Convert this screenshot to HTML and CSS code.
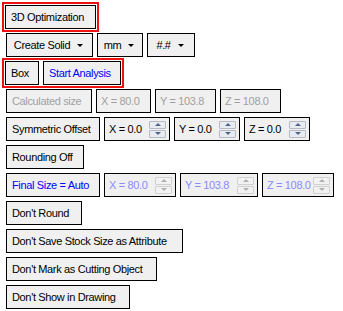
FILE: index.html
```html
<!DOCTYPE html>
<html lang="en">
<head>
    <meta charset="UTF-8">
    <meta name="viewport" content="width=device-width, initial-scale=1.0">
    <title>Stock Size</title>
    <link rel="stylesheet" href="styles.css">
</head>
<body>
    <div class="panel">
        <!-- Mode -->
        <div class="row">
            <div class="btn marked btn-optimize">3D Optimization</div>
        </div>

        <!-- Options -->
        <div class="row">
            <div class="btn drop btn-create">Create Solid<span class="caret"></span></div>
            <div class="btn drop btn-unit">mm<span class="caret"></span></div>
            <div class="btn drop btn-format">#.#<span class="caret"></span></div>
        </div>

        <div class="row marked">
            <div class="btn btn-box">Box</div>
            <div class="btn blue btn-start">Start Analysis</div>
        </div>

        <!-- Calculated size -->
        <div class="row">
            <div class="btn disabled btn-calc">Calculated size</div>
            <div class="field disabled field-x">X = 80.0</div>
            <div class="field disabled field-y">Y = 103.8</div>
            <div class="field disabled field-z">Z = 108.0</div>
        </div>

        <!-- Offset -->
        <div class="row">
            <div class="btn btn-wide">Symmetric Offset</div>
            <div class="field spin spin-offset">
                <span class="val">X = 0.0</span>
                <span class="spinner"><span class="up"></span><span class="down"></span></span>
            </div>
            <div class="field spin spin-offset">
                <span class="val">Y = 0.0</span>
                <span class="spinner"><span class="up"></span><span class="down"></span></span>
            </div>
            <div class="field spin spin-offset">
                <span class="val">Z = 0.0</span>
                <span class="spinner"><span class="up"></span><span class="down"></span></span>
            </div>
        </div>

        <div class="row">
            <div class="btn btn-rounding">Rounding Off</div>
        </div>

        <!-- Final size -->
        <div class="row">
            <div class="btn blue btn-wide">Final Size = Auto</div>
            <div class="field spin off spin-x">
                <span class="val">X = 80.0</span>
                <span class="spinner"><span class="up"></span><span class="down"></span></span>
            </div>
            <div class="field spin off spin-y">
                <span class="val">Y = 103.8</span>
                <span class="spinner"><span class="up"></span><span class="down"></span></span>
            </div>
            <div class="field spin off spin-x">
                <span class="val">Z = 108.0</span>
                <span class="spinner"><span class="up"></span><span class="down"></span></span>
            </div>
        </div>

        <div class="row">
            <div class="btn btn-round">Don't Round</div>
        </div>
        <div class="row">
            <div class="btn btn-save">Don't Save Stock Size as Attribute</div>
        </div>
        <div class="row">
            <div class="btn btn-mark">Don't Mark as Cutting Object</div>
        </div>
        <div class="row">
            <div class="btn btn-show">Don't Show in Drawing</div>
        </div>
    </div>
</body>
</html>
```

FILE: styles.css
```css
body {
    margin: 0;
    background: #fff;
    font-family: "Liberation Sans", Arial, sans-serif;
    font-size: 11px;
    letter-spacing: -0.35px;
    color: #000;
}
.panel {
    display: flex;
    flex-direction: column;
    gap: 4px;
    padding: 5px 0 0 6px;
}
.row {
    display: flex;
    gap: 4px;
    height: 24px;
    width: fit-content;
}
.marked {
    margin-left: -1px;
    outline: 2px solid #ee1111;
    outline-offset: 1px;
}
.btn,
.field {
    box-sizing: border-box;
    height: 24px;
    border: 1px solid #000;
    background: #f0f0f0;
    display: flex;
    align-items: center;
    white-space: nowrap;
    overflow: hidden;
}
.btn {
    padding-left: 5px;
}
.field {
    padding-left: 4px;
}
.blue {
    color: #0000ff;
}
.disabled {
    color: #a0a0a0;
}

/* dropdowns */
.drop {
    justify-content: center;
    padding: 0 2px 0 0;
    gap: 7px;
}
.caret {
    width: 0;
    height: 0;
    border-left: 3px solid transparent;
    border-right: 3px solid transparent;
    border-top: 3px solid #000;
    margin-top: 1px;
}

/* numeric up/down */
.spin {
    justify-content: space-between;
    padding-right: 3px;
}
.spinner {
    display: flex;
    flex-direction: column;
    flex-shrink: 0;
    gap: 1px;
    width: 17px;
}
.spinner .up,
.spinner .down {
    box-sizing: border-box;
    height: 8px;
    border: 1px solid #b4b9c4;
    border-radius: 1px;
    background: #e8ebf0;
    display: flex;
    align-items: center;
    justify-content: center;
}
.spinner .up::after,
.spinner .down::after {
    content: "";
    width: 0;
    height: 0;
    border-left: 3px solid transparent;
    border-right: 3px solid transparent;
}
.spinner .up::after {
    border-bottom: 3px solid #4e6488;
}
.spinner .down::after {
    border-top: 3px solid #4e6488;
}
.off {
    color: #8a8aff;
}
.off .spinner .up,
.off .spinner .down {
    border-color: #d0d0d0;
    background: #f2f2f2;
}
.off .spinner .up::after {
    border-bottom-color: #b0b0b0;
}
.off .spinner .down::after {
    border-top-color: #b0b0b0;
}

/* control widths */
.btn-optimize { width: 91px; }
.btn-create { width: 87px; }
.btn-unit { width: 46px; }
.btn-format { width: 48px; }
.btn-box { width: 34px; }
.btn-start { width: 78px; }
.btn-calc { width: 86px; }
.field-x { width: 55px; }
.field-y,
.field-z { width: 61px; }
.btn-wide { width: 94px; }
.spin-offset { width: 66px; }
.spin-x { width: 72px; }
.spin-y { width: 78px; }
.btn-rounding { width: 78px; }
.btn-round { width: 76px; }
.btn-save { width: 177px; }
.btn-mark { width: 151px; }
.btn-show { width: 124px; }
```
